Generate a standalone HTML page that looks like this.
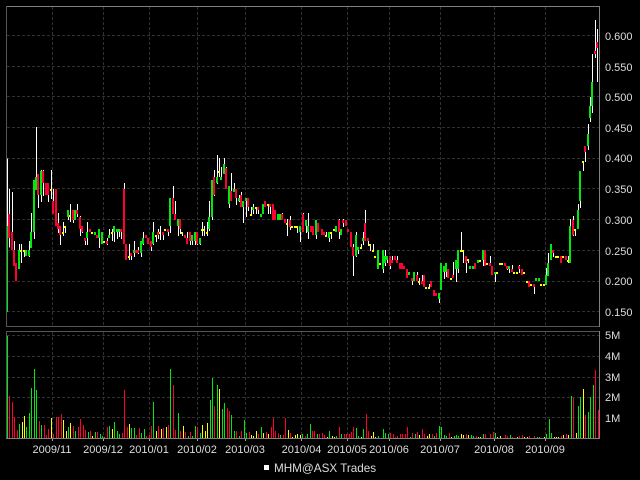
<!DOCTYPE html>
<html>
<head>
<meta charset="utf-8">
<style>
html,body{margin:0;padding:0;background:#000;width:640px;height:480px;overflow:hidden}
svg{display:block}
.w{stroke:#fff;stroke-width:3}
.g{stroke:#00e810;stroke-width:6}
.r{stroke:#ff0033;stroke-width:6}
.y{stroke:#ffff00;stroke-width:6}
.vg{stroke:#00e810;stroke-width:3}
.vr{stroke:#ff0033;stroke-width:3}
.vy{stroke:#ffff00;stroke-width:3}
text{font-family:"Liberation Sans",sans-serif;font-size:11px;fill:#dcdcdc}
</style>
</head>
<body>
<svg width="640" height="480" viewBox="0 0 640 480" xmlns="http://www.w3.org/2000/svg">
<rect width="640" height="480" fill="#000"/>
<g shape-rendering="crispEdges" fill="none">
<path stroke="#303030" stroke-dasharray="3 2" d="M7 35.5H599M7 66.5H599M7 96.5H599M7 127.5H599M7 158.5H599M7 188.5H599M7 219.5H599M7 250.5H599M7 281.5H599M7 311.5H599M7 335.5H599M7 356.5H599M7 377.5H599M7 397.5H599M7 417.5H599"/>
<path stroke="#303030" stroke-dasharray="3 2" d="M52.5 7V326M103.5 7V326M149.5 7V326M197.5 7V326M245.5 7V326M301.5 7V326M347.5 7V326M389.5 7V326M440.5 7V326M494.5 7V326M545.5 7V326M52.5 332V438M103.5 332V438M149.5 332V438M197.5 332V438M245.5 332V438M301.5 332V438M347.5 332V438M389.5 332V438M440.5 332V438M494.5 332V438M545.5 332V438"/>
</g>

<g shape-rendering="crispEdges" fill="none">
<!-- candles 1 -->
<g transform="translate(0 100) scale(.333333)">
<path class="w" transform="translate(1.5 0)" d="M21 175V378M27 267V443M36 276V450M42 423V480M57 432V450M63 432V489M72 456V471M87 423V471M93 339V396M102 396V417M108 81V231M114 285V324M123 210V306M129 210V288M144 285V306M153 210V297M159 267V303M174 339V399M180 405V435M189 366V408M195 384V399M204 351V360M210 312V366M219 360V369M231 312V351M240 348V408M246 396V399M255 423V435M261 366V435M297 414V444M321 414V435M327 387V405M336 387V423M342 396V426M351 396V417M357 396V411M363 396V417M372 249V267M387 432V480M393 468V480M402 423V471M414 441V462M423 459V471M429 396V435M453 441V453M459 366V435M468 411V426M474 387V417"/>
<path class="g" d="M21 378V636M57 450V507M78 450V468M87 450V468M93 396V444M102 240V396M108 231V270M123 213V285M204 330V351M225 330V360M261 396V414M285 396V405M297 387V414M306 396V432M327 405V414M342 378V396M351 387V396M357 387V396M402 450V459M423 423V459M429 414V432M459 396V432"/>
<path class="r" d="M27 342V414M36 396V450M42 450V498M48 489V543M114 222V285M129 213V249M138 249V285M144 249V285M159 303V342M168 267V378M174 369V387M180 378V405M219 330V360M231 330V342M240 351V387M246 378V396M255 414V423M270 387V396M291 405V414M321 423V432M363 387V396M372 267V432M378 432V480M393 459V468M408 450V459M414 450V459M438 405V414M444 414V432M453 423V441M474 396V405"/>
<path class="y" d="M63 450V456M72 450V456M153 267V273M189 396V402M195 378V384M210 345V351M276 396V402M312 423V429M336 396V402M387 468V474M468 405V411M480 396V402"/>
</g>
<!-- candles 2 -->
<g transform="translate(160 130) scale(.333333)">
<path class="w" transform="translate(1.5 0)" d="M0 288V330M9 315V330M24 306V318M30 288V309M39 168V204M45 213V252M54 288V318M60 297V312M66 312V318M81 306V324M90 333V345M96 333V345M105 333V345M111 333V345M120 342V345M126 276V318M132 288V318M141 276V318M147 213V303M156 261V270M162 120V198M171 75V162M177 84V141M183 111V150M192 84V102M198 111V114M207 222V234M213 129V183M222 159V177M228 204V225M237 195V216M243 186V195M249 231V279M258 213V261M264 231V243M273 231V252M279 222V252M288 237V252M294 240V252M324 228V252M330 231V252M366 249V252M381 267V318M390 258V300M411 294V309M420 306V336M429 249V252M438 288V309M444 249V327M468 276V327"/>
<path class="g" d="M30 204V288M54 267V288M96 315V333M105 306V333M120 324V342M147 261V297M156 150V261M171 141V159M183 141V150M192 102V132M207 168V222M222 177V186M237 204V213M249 213V231M258 204V213M279 231V240M303 252V261M309 222V252M354 252V270M360 252V270M420 288V306M438 270V288M444 288V306M468 270V315"/>
<path class="r" d="M9 306V315M24 297V306M39 204V252M45 252V270M60 267V297M75 315V324M81 324V342M90 306V333M111 306V342M162 141V195M198 114V177M213 183V213M228 177V204M243 195V231M264 204V231M294 231V240M315 213V231M330 222V231M339 222V270M345 240V270M366 252V270M375 267V279M390 270V291M429 252V306M453 288V306M459 288V315M474 279V306"/>
<path class="y" d="M15 297V303M66 306V312M126 297V303M132 297V303M141 306V312M177 123V129M273 252V258M288 231V237M324 222V228M381 279V285M396 288V294M405 288V294M411 288V294"/>
</g>
<!-- candles 3 -->
<g transform="translate(320 190) scale(.333333)">
<path class="w" transform="translate(1.5 0)" d="M18 126V135M27 144V156M33 132V147M57 87V147M69 87V111M99 162V258M108 126V201M114 180V192M123 162V171M129 126V165M135 60V99M144 153V168M150 168V183M159 162V180M189 237V249M195 180V228M201 210V219M210 228V237M216 198V210M231 198V210M276 273V285M291 246V255M297 264V285M306 255V273M327 282V291M357 327V339M372 246V267M378 246V261M399 216V255M408 237V276M414 237V249M423 126V180M429 186V219M438 219V249M444 213V219"/>
<path class="g" d="M27 126V144M48 108V126M63 117V135M108 135V198M114 171V180M129 144V153M174 180V237M189 180V237M195 198V219M201 198V210M267 246V255M282 246V273M357 309V327M363 219V300M372 228V246M378 219V246M408 210V237M414 180V237M450 228V237M459 228V237M474 210V219"/>
<path class="r" d="M6 117V135M12 126V135M57 90V126M69 90V99M78 90V108M84 117V126M93 126V171M99 171V198M135 99V153M144 144V153M210 198V228M216 210V219M225 198V210M231 210V219M240 219V237M246 219V237M252 228V237M261 237V264M276 264V273M291 255V273M306 273V282M312 255V291M333 273V291M342 300V318M348 309V318M384 237V264M399 255V264M438 198V219M465 219V237"/>
<path class="y" d="M18 135V141M33 126V132M42 117V123M123 171V177M150 162V168M159 180V186M165 198V204M180 219V225M297 273V279M318 291V297M327 291V297M393 264V270M423 180V186M429 180V186M444 207V213M480 210V216"/>
</g>
<!-- candles 4 -->
<g transform="translate(480 130) scale(.333333)">
<path class="w" transform="translate(1.5 0)" d="M9 390V408M30 378V399M45 432V456M81 417V420M87 417V429M96 405V417M117 405V429M162 471V492M198 414V435M204 369V399M219 369V381M264 378V399M270 267V288M279 258V318M285 303V318M294 222V240M300 213V234M309 99V123M315 66V96M324 -18V12M324 48V60"/>
<path class="g" d="M9 360V390M45 426V432M87 408V417M168 444V453M177 444V453M198 435V465M204 399V438M213 342V390M270 288V399M294 240V297M300 123V213M324 12V48"/>
<path class="r" d="M15 360V408M30 399V408M36 408V435M75 399V408M81 408V417M96 417V426M117 408V417M126 417V435M147 453V471M162 462V471M219 360V369M243 378V399M258 378V390M279 270V315M315 48V66"/>
<path class="y" d="M21 399V405M51 426V432M60 399V405M66 399V405M102 426V432M111 426V432M132 426V432M141 453V459M153 462V468M183 462V468M192 462V468M228 378V384M234 378V384M249 378V384M264 390V396M285 297V303M309 93V99"/>
</g>
<g transform="translate(480 10) scale(.333333)">
<path class="w" transform="translate(1.5 0)" d="M330 261V336M336 132V309M345 30V144M351 57V216"/>
<path class="g" d="M330 288V324M336 216V288"/>
<path class="r" d="M345 123V132M351 96V114"/>
</g>

<!-- volume 1 -->
<g transform="translate(0 325) scale(.333333)">
<g transform="translate(.5 0)">
<path class="vg" d="M22 33V342M58 297V342M79 306V342M88 264V342M94 189V342M103 132V342M109 195V342M124 300V342M205 306V342M226 318V342M265 321V342M286 321V342M301 327V342M307 333V342M328 303V342M343 291V342M352 318V342M358 327V342M394 309V342M403 309V342M424 324V342M433 312V342M460 231V342"/>
<path class="vr" d="M28 213V342M37 231V342M43 276V342M52 315V342M118 288V342M133 300V342M139 330V342M145 312V342M160 327V342M169 276V342M175 276V342M184 267V342M220 303V342M235 306V342M241 282V342M250 300V342M256 315V342M271 318V342M292 321V342M322 306V342M367 324V342M373 195V342M382 306V342M409 330V342M418 309V342M439 333V342M448 330V342M454 303V342M475 303V342"/>
<path class="vy" d="M67 291V342M73 273V342M154 279V342M190 285V342M199 318V342M211 294V342M277 333V342M313 337V342M337 312V342M388 297V342M469 318V342"/>
</g>
</g>
<!-- volume 2 -->
<g transform="translate(160 325) scale(.333333)">
<g transform="translate(.5 0)">
<path class="vg" d="M31 132V342M55 264V342M85 333V342M97 333V342M106 303V342M121 324V342M151 225V342M157 159V342M172 180V342M187 252V342M193 234V342M214 270V342M223 318V342M238 333V342M253 285V342M259 324V342M304 306V342M361 330V342M427 327V342M442 327V342M451 297V342M472 327V342"/>
<path class="vr" d="M10 309V342M25 300V342M40 180V342M46 315V342M61 318V342M76 321V342M91 321V342M112 306V342M163 243V342M202 249V342M208 258V342M229 318V342M244 318V342M268 321V342M295 327V342M319 321V342M334 306V342M340 279V342M346 318V342M355 324V342M370 330V342M376 279V342M391 324V342M436 333V342M457 318V342M463 318V342M478 327V342"/>
<path class="vy" d="M4 312V342M19 306V342M70 303V342M127 300V342M136 318V342M142 294V342M178 192V342M274 330V342M280 333V342M289 318V342M310 324V342M325 327V342M385 315V342M397 336V342M406 330V342M412 327V342M421 330V342"/>
</g>
</g>
<!-- volume 3 -->
<g transform="translate(320 325) scale(.333333)">
<g transform="translate(.5 0)">
<path class="vg" d="M28 318V342M49 333V342M64 327V342M109 309V342M115 333V342M130 312V342M175 333V342M190 312V342M196 324V342M205 327V342M271 336V342M286 327V342M343 333V342M358 303V342M364 306V342M373 330V342M379 333V342M403 333V342M409 330V342M415 333V342M454 330V342M460 333V342"/>
<path class="vr" d="M7 324V342M13 330V342M58 306V342M73 327V342M79 327V342M88 327V342M94 321V342M100 306V342M139 267V342M145 318V342M211 324V342M220 327V342M226 336V342M232 333V342M241 327V342M247 327V342M256 327V342M262 306V342M277 324V342M292 321V342M307 312V342M313 327V342M337 327V342M349 324V342M388 324V342M439 327V342M469 333V342"/>
<path class="vy" d="M22 336V342M37 333V342M43 336V342M124 336V342M154 333V342M160 321V342M166 336V342M298 330V342M322 333V342M328 327V342M394 336V342M424 327V342M430 330V342M445 330V342M475 336V342"/>
</g>
</g>
<!-- volume 4 -->
<g transform="translate(480 325) scale(.333333)">
<g transform="translate(.5 0)">
<path class="vg" d="M10 327V342M46 324V342M91 330V342M172 336V342M178 336V342M199 327V342M208 282V342M214 324V342M274 213V342M295 243V342M301 216V342M325 261V342M331 216V342M340 180V342"/>
<path class="vr" d="M16 327V342M31 327V342M40 321V342M76 330V342M82 333V342M97 336V342M118 333V342M127 330V342M148 333V342M163 333V342M244 333V342M259 327V342M280 219V342M316 270V342M346 135V342M355 255V342"/>
<path class="vy" d="M1 336V342M52 336V342M61 333V342M112 336V342M133 336V342M142 336V342M193 336V342M223 336V342M229 336V342M235 336V342M250 330V342M265 330V342M289 324V342M310 192V342"/>
</g>
</g>

<!-- frame -->
<path stroke="#808080" d="M6 6.5H600M599.5 6V327M599.5 331V439"/>
<path stroke="#555" d="M6 326.5H599M6 331.5H599M6.5 6V327M6.5 331V438"/>
<path stroke="#808080" d="M6 438.5H600"/>
<path stroke="#a0a0a0" d="M52.5 439V441M103.5 439V441M149.5 439V441M197.5 439V441M245.5 439V441M301.5 439V441M347.5 439V441M389.5 439V441M440.5 439V441M494.5 439V441M545.5 439V441"/>
<rect x="264" y="465" width="5" height="5" fill="#fff" stroke="none"/>
</g>

<g>
<text x="605" y="40">0.600</text>
<text x="605" y="71">0.550</text>
<text x="605" y="101">0.500</text>
<text x="605" y="132">0.450</text>
<text x="605" y="162">0.400</text>
<text x="605" y="193">0.350</text>
<text x="605" y="224">0.300</text>
<text x="605" y="255">0.250</text>
<text x="605" y="285">0.200</text>
<text x="605" y="316">0.150</text>
<text x="605" y="339">5M</text>
<text x="605" y="360">4M</text>
<text x="605" y="381">3M</text>
<text x="605" y="401">2M</text>
<text x="605" y="422">1M</text>
<text x="52" y="453" text-anchor="middle">2009/11</text>
<text x="103" y="453" text-anchor="middle">2009/12</text>
<text x="149" y="453" text-anchor="middle">2010/01</text>
<text x="197" y="453" text-anchor="middle">2010/02</text>
<text x="245" y="453" text-anchor="middle">2010/03</text>
<text x="301.5" y="453" text-anchor="middle">2010/04</text>
<text x="347" y="453" text-anchor="middle">2010/05</text>
<text x="389" y="453" text-anchor="middle">2010/06</text>
<text x="440" y="453" text-anchor="middle">2010/07</text>
<text x="494" y="453" text-anchor="middle">2010/08</text>
<text x="545" y="453" text-anchor="middle">2010/09</text>
<text x="274" y="472" style="font-size:11.7px">MHM@ASX Trades</text>
</g>
</svg>
</body>
</html>
